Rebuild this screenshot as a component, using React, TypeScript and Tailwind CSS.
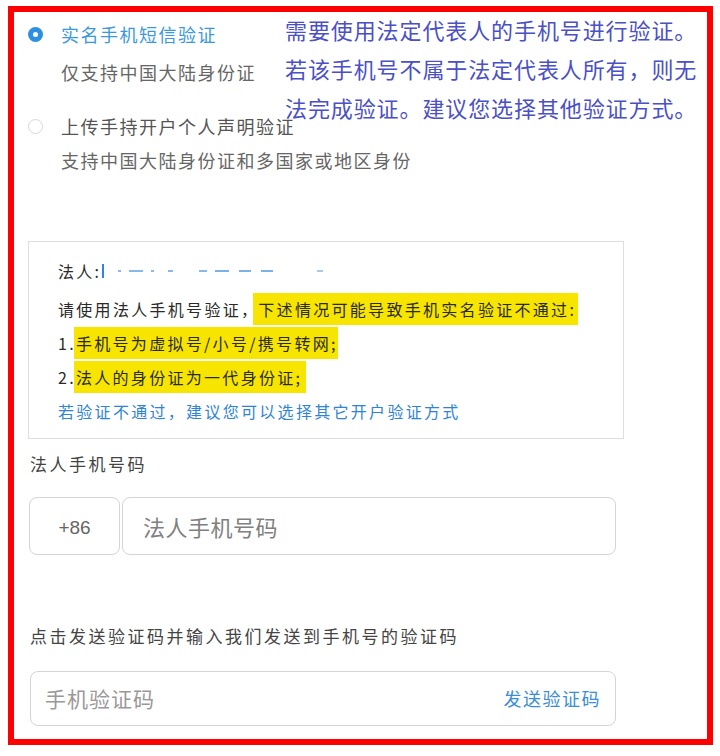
import React from 'react';

const font = { fontFamily: '"Noto Sans CJK SC", "Noto Sans", sans-serif' };

function Radio({ checked }: { checked: boolean }) {
  if (checked) {
    return (
      <span className="flex h-[15px] w-[15px] items-center justify-center rounded-full bg-[#2d8fe0]">
        <span className="h-[5px] w-[5px] rounded-full bg-white" />
      </span>
    );
  }
  return <span className="h-[15px] w-[15px] rounded-full border border-[#d6d6d6] bg-white" />;
}

function Dash({ w, ml, op = 'opacity-80' }: { w: number; ml: number; op?: string }) {
  return (
    <span
      className={`inline-block h-[2px] bg-[#6aa8e6] align-middle ${op}`}
      style={{ width: w, marginLeft: ml }}
    />
  );
}

export default function App() {
  return (
    <div className="h-[756px] w-[720px] bg-white pl-[8px] pt-[6px]" style={font}>
      <div className="relative h-[739px] w-[705px] border-[6px] border-[#ff0000] bg-white pl-[14px]">
        {/* annotation */}
        <div className="absolute left-[271px] top-[-2px] whitespace-nowrap text-[22px] leading-[39px] tracking-[0.9px] text-[#4b50c4]">
          需要使用法定代表人的手机号进行验证。
          <br />
          若该手机号不属于法定代表人所有，则无
          <br />
          法完成验证。建议您选择其他验证方式。
        </div>

        <div className="flex h-[44px] items-center">
          <Radio checked />
          <span className="ml-[18px] text-[18px] tracking-[1.5px] text-[#3a98dc]">实名手机短信验证</span>
        </div>
        <div className="flex h-[32px] items-center pl-[33px] text-[18px] tracking-[1.5px] text-[#666]">
          仅支持中国大陆身份证
        </div>

        <div className="mt-[20px] flex h-[36px] items-center">
          <Radio checked={false} />
          <span className="ml-[18px] text-[18px] tracking-[1.5px] text-[#555]">上传手持开户个人声明验证</span>
        </div>
        <div className="flex h-[32px] items-center pl-[33px] text-[18px] tracking-[1.5px] text-[#666]">
          支持中国大陆身份证和多国家或地区身份
        </div>

        <div className="mt-[65px] w-[596px] border border-[#dedede] pb-[10px] pl-[29px] pt-[12px] text-[16px] tracking-[2.3px] text-[#2a2a2a]">
          <div className="flex h-[34px] items-center whitespace-nowrap">
            法人:
            <span className="ml-[1px] inline-block h-[14px] w-[2px] bg-[#2e86de]" />
            <Dash w={3} ml={14} />
            <Dash w={14} ml={8} />
            <Dash w={3} ml={8} />
            <Dash w={5} ml={14} />
            <Dash w={8} ml={26} />
            <Dash w={14} ml={8} op="opacity-90" />
            <Dash w={12} ml={10} op="opacity-90" />
            <Dash w={12} ml={10} op="opacity-90" />
            <Dash w={6} ml={44} op="opacity-60" />
          </div>
          <div className="mt-[4px] flex h-[34px] items-center whitespace-nowrap">
            请使用法人手机号验证，
            <span className="-ml-[6px] bg-[#f7e500] py-[4px] pl-[5px] pr-[2px]">下述情况可能导致手机实名验证不通过:</span>
          </div>
          <div className="flex h-[34px] items-center whitespace-nowrap">
            1.<span className="-ml-[2px] bg-[#f7e500] py-[4px] pl-[2px]">手机号为虚拟号/小号/携号转网;</span>
          </div>
          <div className="flex h-[34px] items-center whitespace-nowrap">
            2.<span className="-ml-[2px] bg-[#f7e500] py-[4px] pl-[2px] pr-[4px]">法人的身份证为一代身份证;</span>
          </div>
          <div className="flex h-[34px] items-center whitespace-nowrap text-[#2f84d4]">
            若验证不通过，建议您可以选择其它开户验证方式
          </div>
        </div>

        <div className="mt-[12px] flex h-[26px] items-center pl-[2px] text-[17px] tracking-[2.5px] text-[#444]">
          法人手机号码
        </div>

        <div className="ml-[1px] mt-[20px] flex h-[58px] w-[587px] gap-[2px]">
          <div className="flex w-[91px] items-center justify-center rounded-[8px] border border-[#d4d4d4] pt-[4px] text-[19px] text-[#666]" style={{ fontFamily: '"Liberation Sans", Arial, sans-serif' }}>
            +86
          </div>
          <div className="flex flex-1 items-center rounded-[8px] border border-[#d4d4d4] pl-[20px] text-[22px] tracking-[0.5px] text-[#808080]">
            法人手机号码
          </div>
        </div>

        <div className="mt-[68px] flex h-[26px] items-center pl-[2px] text-[17px] tracking-[2.5px] text-[#444]">
          点击发送验证码并输入我们发送到手机号的验证码
        </div>

        <div className="ml-[2px] mt-[22px] flex h-[55px] w-[586px] items-center justify-between rounded-[8px] border border-[#d4d4d4] pl-[14px] pr-[14px]">
          <span className="text-[21px] tracking-[1px] text-[#999]">手机验证码</span>
          <span className="text-[18px] tracking-[1.5px] text-[#3a8ed6]">发送验证码</span>
        </div>
      </div>
    </div>
  );
}
